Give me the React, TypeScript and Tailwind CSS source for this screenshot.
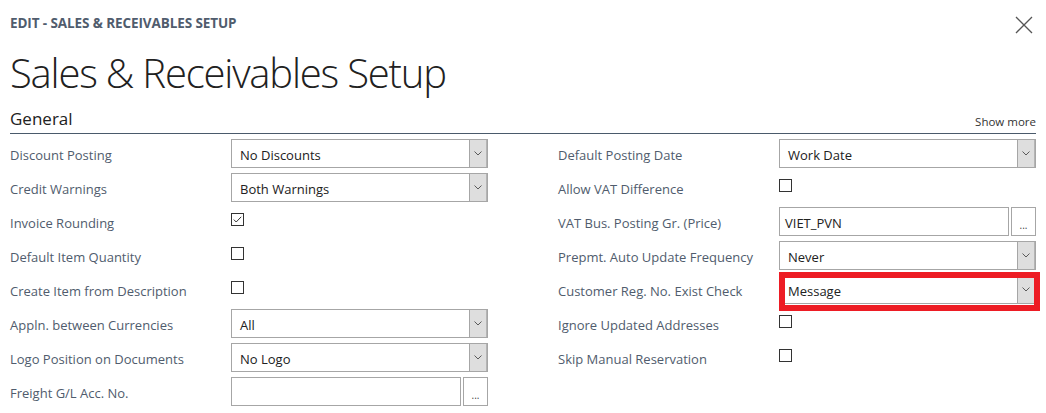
import React from "react";

type Field =
  | { label: string; kind: "select"; value: string; highlight?: boolean }
  | { label: string; kind: "check"; checked?: boolean }
  | { label: string; kind: "lookup"; value: string };

const leftFields: Field[] = [
  { label: "Discount Posting", kind: "select", value: "No Discounts" },
  { label: "Credit Warnings", kind: "select", value: "Both Warnings" },
  { label: "Invoice Rounding", kind: "check", checked: true },
  { label: "Default Item Quantity", kind: "check" },
  { label: "Create Item from Description", kind: "check" },
  { label: "Appln. between Currencies", kind: "select", value: "All" },
  { label: "Logo Position on Documents", kind: "select", value: "No Logo" },
  { label: "Freight G/L Acc. No.", kind: "lookup", value: "" },
];

const rightFields: Field[] = [
  { label: "Default Posting Date", kind: "select", value: "Work Date" },
  { label: "Allow VAT Difference", kind: "check" },
  { label: "VAT Bus. Posting Gr. (Price)", kind: "lookup", value: "VIET_PVN" },
  { label: "Prepmt. Auto Update Frequency", kind: "select", value: "Never" },
  { label: "Customer Reg. No. Exist Check", kind: "select", value: "Message", highlight: true },
  { label: "Ignore Updated Addresses", kind: "check" },
  { label: "Skip Manual Reservation", kind: "check" },
];

const Chevron = () => (
  <svg width="8" height="5" viewBox="0 0 8 5" fill="none">
    <path d="M0.5 0.5 L4 4 L7.5 0.5" stroke="#5a5a5a" strokeWidth="1" />
  </svg>
);

const SelectBox = ({ value, highlight }: { value: string; highlight?: boolean }) => (
  <div className="relative w-[257px]">
    <div className="flex h-[29px] border border-[#a6a6a6] bg-white">
      <div className="flex-1 pl-[8px] pt-[2px] leading-[27px] text-[13px] text-[#212121]">{value}</div>
      <div className="w-[18px] flex items-center justify-center bg-[#dedede] border-l border-[#a6a6a6] border-r border-r-[#b4b4b4]">
        <Chevron />
      </div>
    </div>
    {/* red annotation frame */}
    {highlight && (
      <div className="absolute left-0 -right-[4px] -top-[3px] -bottom-[7px] border-[6px] border-[#ed1c24]" />
    )}
  </div>
);

const LookupBox = ({ value }: { value: string }) => (
  <div className="flex w-[257px] gap-[2px]">
    <div className="flex-1 h-[29px] border border-[#a6a6a6] bg-white pl-[5px] pt-[2px] leading-[27px] text-[13px] text-[#212121]">
      {value}
    </div>
    <div className="w-[25px] h-[29px] border border-[#a6a6a6] bg-white flex items-end justify-center pb-[5px] text-[10px] leading-[10px] text-[#444]">
      ...
    </div>
  </div>
);

const CheckBox = ({ checked }: { checked?: boolean }) => (
  <div className="w-[13px] h-[13px] border border-[#333] bg-white mb-[3px] flex items-center justify-center">
    {checked && (
      <svg width="11" height="11" viewBox="0 0 11 11" fill="none">
        <path d="M1.8 5.6 L4.2 8 L9.2 2.8" stroke="#333" strokeWidth="1" />
      </svg>
    )}
  </div>
);

const FieldRow = ({ field }: { field: Field }) => (
  <div className="flex items-center h-[34px]">
    <div className="w-[221px] pt-[5px] text-[13px] text-[#505c6d]">{field.label}</div>
    {field.kind === "select" && <SelectBox value={field.value} highlight={field.highlight} />}
    {field.kind === "lookup" && <LookupBox value={field.value} />}
    {field.kind === "check" && <CheckBox checked={field.checked} />}
  </div>
);

export default function App() {
  return (
    <div
      className="w-[1046px] h-[413px] overflow-hidden bg-white px-[10px] pt-[13px]"
      style={{ fontFamily: '"Open Sans", "Noto Sans", sans-serif' }}
    >
      {/* caption + close */}
      <div className="flex items-center justify-between h-[20px]">
        <div className="text-[13.5px] font-bold tracking-[-0.1px] text-[#505c6d]">
          EDIT - SALES &amp; RECEIVABLES SETUP
        </div>
        <svg width="18" height="18" viewBox="0 0 18 18" fill="none" className="mr-[3px] mt-[4px]">
          <path d="M1 1 L17 17 M17 1 L1 17" stroke="#555" strokeWidth="1.3" />
        </svg>
      </div>

      <h1 className="mt-[15px] text-[40px] font-light leading-[50px] text-[#212121] tracking-[-1.2px]">
        Sales &amp; Receivables Setup
      </h1>

      {/* section header */}
      <div className="flex items-end justify-between border-b border-[#4a5a6b] h-[36px] pb-[3px]">
        <div className="text-[17px] leading-[22px] text-[#212121]">General</div>
        <div className="text-[11.5px] leading-[16px] text-[#333]">Show more</div>
      </div>

      <div className="grid grid-cols-2 gap-x-[70px] pt-[2px]">
        <div>
          {leftFields.map((f) => (
            <FieldRow key={f.label} field={f} />
          ))}
        </div>
        <div>
          {rightFields.map((f) => (
            <FieldRow key={f.label} field={f} />
          ))}
        </div>
      </div>
    </div>
  );
}
